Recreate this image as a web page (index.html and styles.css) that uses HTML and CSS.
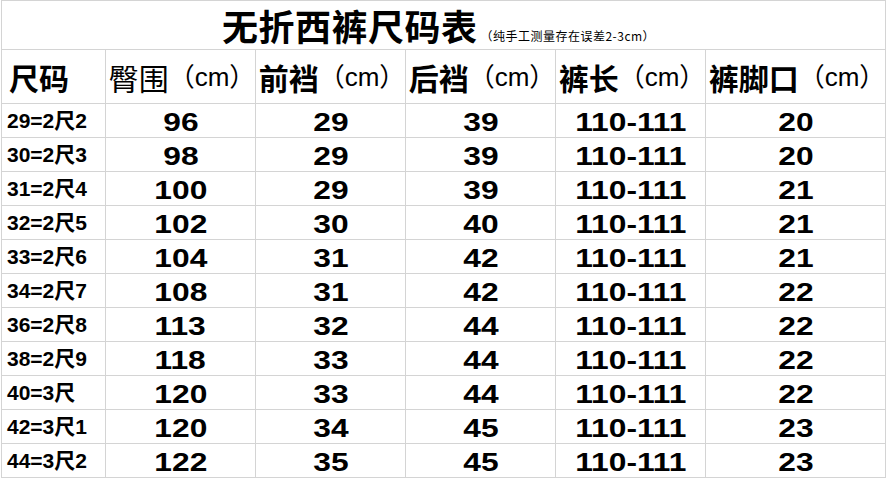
FILE: index.html
```html
<!DOCTYPE html>
<html lang="zh">
<head>
<meta charset="utf-8">
<title>无折西裤尺码表</title>
<link rel="stylesheet" href="styles.css">
</head>
<body>
<div class="sheet">
  <div class="title"><span class="title-main">无折西裤尺码表</span><span class="title-note">（纯手工测量存在误差2-3cm）</span></div>

  <div class="hd hd-first"><span class="hd-b">尺码</span></div>
  <div class="hd"><span class="hd-r">臀围</span><span class="unit">（cm）</span></div>
  <div class="hd"><span class="hd-b">前裆</span><span class="unit">（cm）</span></div>
  <div class="hd"><span class="hd-b">后裆</span><span class="unit">（cm）</span></div>
  <div class="hd"><span class="hd-b">裤长</span><span class="unit">（cm）</span></div>
  <div class="hd"><span class="hd-b">裤脚口</span><span class="unit">（cm）</span></div>

  <div class="sz">29=2尺2</div><div class="nv"><span>96</span></div><div class="nv"><span>29</span></div><div class="nv"><span>39</span></div><div class="nv"><span>110-111</span></div><div class="nv"><span>20</span></div>
  <div class="sz">30=2尺3</div><div class="nv"><span>98</span></div><div class="nv"><span>29</span></div><div class="nv"><span>39</span></div><div class="nv"><span>110-111</span></div><div class="nv"><span>20</span></div>
  <div class="sz">31=2尺4</div><div class="nv"><span>100</span></div><div class="nv"><span>29</span></div><div class="nv"><span>39</span></div><div class="nv"><span>110-111</span></div><div class="nv"><span>21</span></div>
  <div class="sz">32=2尺5</div><div class="nv"><span>102</span></div><div class="nv"><span>30</span></div><div class="nv"><span>40</span></div><div class="nv"><span>110-111</span></div><div class="nv"><span>21</span></div>
  <div class="sz">33=2尺6</div><div class="nv"><span>104</span></div><div class="nv"><span>31</span></div><div class="nv"><span>42</span></div><div class="nv"><span>110-111</span></div><div class="nv"><span>21</span></div>
  <div class="sz">34=2尺7</div><div class="nv"><span>108</span></div><div class="nv"><span>31</span></div><div class="nv"><span>42</span></div><div class="nv"><span>110-111</span></div><div class="nv"><span>22</span></div>
  <div class="sz">36=2尺8</div><div class="nv"><span>113</span></div><div class="nv"><span>32</span></div><div class="nv"><span>44</span></div><div class="nv"><span>110-111</span></div><div class="nv"><span>22</span></div>
  <div class="sz">38=2尺9</div><div class="nv"><span>118</span></div><div class="nv"><span>33</span></div><div class="nv"><span>44</span></div><div class="nv"><span>110-111</span></div><div class="nv"><span>22</span></div>
  <div class="sz">40=3尺</div><div class="nv"><span>120</span></div><div class="nv"><span>33</span></div><div class="nv"><span>44</span></div><div class="nv"><span>110-111</span></div><div class="nv"><span>22</span></div>
  <div class="sz">42=3尺1</div><div class="nv"><span>120</span></div><div class="nv"><span>34</span></div><div class="nv"><span>45</span></div><div class="nv"><span>110-111</span></div><div class="nv"><span>23</span></div>
  <div class="sz">44=3尺2</div><div class="nv"><span>122</span></div><div class="nv"><span>35</span></div><div class="nv"><span>45</span></div><div class="nv"><span>110-111</span></div><div class="nv"><span>23</span></div>
</div>
</body>
</html>
```

FILE: styles.css
```css
html, body {
  margin: 0;
  padding: 0;
  background: #ffffff;
}

body {
  font-family: "Liberation Sans", "Noto Sans CJK SC", sans-serif;
  color: #000000;
}

.sheet {
  margin-left: 1px;
  width: 885px;
  box-sizing: border-box;
  display: grid;
  grid-template-columns: 103px 149px 149px 149px 149px 179px;
  grid-template-rows: 48px 53px repeat(11, 33px);
  gap: 1px;
  padding: 1px;
  background: #d4d4d4;
}

.sheet > div {
  background: #ffffff;
  display: flex;
  align-items: center;
  overflow: visible;
  white-space: nowrap;
}

.title {
  grid-column: 1 / -1;
  justify-content: center;
  align-items: baseline !important;
  padding-top: 3px;
  padding-right: 10px;
}

.title-main {
  font-family: "Noto Sans CJK SC", sans-serif;
  font-weight: 700;
  font-size: 36px;
  line-height: 42px;
  letter-spacing: 0.5px;
}

.title-note {
  font-family: "Noto Sans CJK SC", sans-serif;
  font-size: 12px;
  line-height: 14px;
  margin-left: 3px;
  letter-spacing: 0.5px;
}

.hd {
  justify-content: center;
  line-height: 1;
  padding-left: 3px;
}

.hd-first {
  justify-content: flex-start !important;
  padding-left: 7px;
}

.hd-b {
  font-family: "Noto Sans CJK SC", sans-serif;
  font-weight: 700;
  font-size: 30px;
}

.hd-r {
  font-family: "Noto Sans CJK SC", sans-serif;
  font-weight: 400;
  font-size: 30px;
}

.unit {
  font-family: "Liberation Sans", "Noto Sans CJK SC", sans-serif;
  font-weight: 400;
  font-size: 26px;
}

.sz {
  padding-left: 5px;
  font-weight: 700;
  font-size: 21px;
  line-height: 1;
}

.nv {
  justify-content: center;
  font-weight: 700;
  font-size: 25px;
  line-height: 1;
  padding-top: 3px;
  box-sizing: border-box;
}

.nv span {
  display: inline-block;
  transform: scaleX(1.27);
  transform-origin: center;
}
```
